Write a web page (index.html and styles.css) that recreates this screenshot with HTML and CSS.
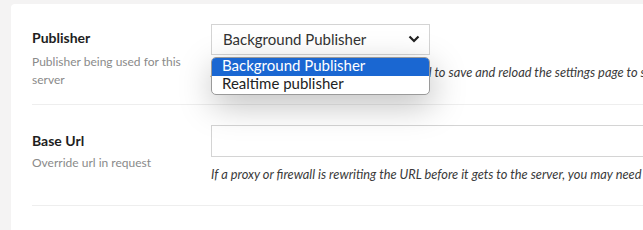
FILE: index.html
```html
<!DOCTYPE html>
<html>
<head>
	<meta charset="utf-8">
	<title>Settings</title>
	<link rel="stylesheet" href="styles.css">
</head>
<body>
<div class="card">
	<div class="row row-publisher">
		<div class="label">
			<h4>Publisher</h4>
			<p>Publisher being used for this server</p>
		</div>
		<div class="control">
			<div class="select-wrap">
				<div class="select">
					<span>Background Publisher</span>
					<svg class="chevron" width="12" height="8" viewBox="0 0 12 8"><path d="M1.5 1.5 L6 6 L10.5 1.5" fill="none" stroke="#222" stroke-width="2.2"/></svg>
				</div>
				<ul class="options">
					<li class="selected">Background Publisher</li>
					<li>Realtime publisher</li>
				</ul>
			</div>
			<p class="help">After changing the publisher you will need to save and reload the settings page to see the changes</p>
		</div>
	</div>
	<div class="row row-url">
		<div class="label">
			<h4>Base Url</h4>
			<p>Override url in request</p>
		</div>
		<div class="control">
			<div class="input"></div>
			<p class="help">If a proxy or firewall is rewriting the URL before it gets to the server, you may need to enter the original URL here</p>
		</div>
	</div>
</div>
</body>
</html>
```

FILE: styles.css
```css
body, p, ul, h4 {
	margin: 0
}

ul {
	padding-left: 0;
	list-style: none
}

html, body {
	height: 100%;
	overflow: hidden;
}

body {
	background-color: #f4f3f3;
	font-family: Lato, "Open Sans", sans-serif;
	padding: 4px 0 0 11px;
	box-sizing: border-box;
}

.card {
	background-color: #ffffff;
	border-radius: 4px 0 0 0;
	padding: 0 0 0 21px;
	height: 100%;
	overflow: hidden;
}

.row {
	display: flex;
	border-bottom: 1px solid #eeeeee;
}

.row-publisher {
	padding: 20px 0 15px;
}

.row-url {
	padding: 20px 0 22px;
}

.label {
	width: 179px;
	flex: none;
	padding-top: 4px;
}

.label h4 {
	font-size: 14px;
	font-weight: 700;
	color: #1e1e1e;
	line-height: 20px;
}

.row-url .label {
	padding-top: 6px;
}

.label p {
	font-size: 12px;
	color: #8a8a8a;
	line-height: 18px;
	margin-top: 5px;
	padding-right: 30px;
}

.row-url .label p {
	margin-top: 3px;
}

.control {
	flex: 1;
	min-width: 0;
	position: relative;
}

.select-wrap {
	position: relative;
	width: 219px;
}

.select {
	display: flex;
	align-items: center;
	justify-content: space-between;
	height: 31px;
	box-sizing: border-box;
	border: 1px solid #d4d4d4;
	padding: 0 9px 2px 11px;
	font-size: 15px;
	color: #333333;
}

.options {
	position: absolute;
	left: 0;
	top: 33px;
	width: 219px;
	box-sizing: border-box;
	background-color: #ffffff;
	border: 1px solid #9a9a9a;
	border-radius: 5px;
	overflow: hidden;
	box-shadow: 2px 10px 34px rgba(0, 0, 0, 0.26);
	font-size: 15px;
	z-index: 2;
}

.options li {
	height: 18px;
	line-height: 15px;
	padding-left: 10px;
	color: #222222;
}

.options li.selected {
	background-color: #1a67d2;
	color: #ffffff;
}

.input {
	height: 32px;
	box-sizing: border-box;
	border: 1px solid #d4d4d4;
	border-right: none;
}

.help {
	font-size: 12.8px;
	font-style: italic;
	color: #3a3a3a;
	line-height: 18px;
	margin-top: 8px;
	white-space: nowrap;
}
```
